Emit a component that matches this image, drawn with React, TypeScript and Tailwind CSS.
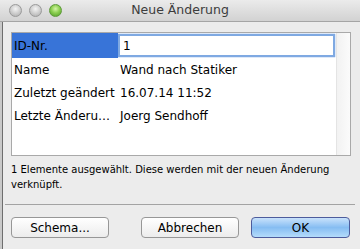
import { useState } from 'react'

const font = { fontFamily: '"DejaVu Sans", "Liberation Sans", sans-serif' }

function TrafficLight({ green }: { green?: boolean }) {
  return (
    <div
      className={
        green
          ? 'w-[13px] h-[13px] rounded-full border border-[#5e9a3a] bg-[radial-gradient(circle_at_50%_35%,#d6f5a8_0%,#8dd052_45%,#4e9a26_100%)]'
          : 'w-[13px] h-[13px] rounded-full border border-[#9a9a9a] bg-[radial-gradient(circle_at_50%_35%,#f4f4f4_0%,#cfcfcf_50%,#a9a9a9_100%)]'
      }
    />
  )
}

function Row({ label, value }: { label: string; value: string }) {
  return (
    <div className="flex h-[23px] items-center text-[12px] text-black">
      <div className="w-[106px] pl-[2px] whitespace-nowrap">{label}</div>
      <div className="pl-[2px] whitespace-nowrap">{value}</div>
    </div>
  )
}

export default function App() {
  const [id, setId] = useState('1')

  return (
    <div className="w-[360px] h-[249px] bg-[#ececec] flex flex-col overflow-hidden" style={font}>
      <div className="h-[22px] relative flex items-center border-b border-[#a5a5a5] bg-gradient-to-b from-[#ebebeb] to-[#d2d2d2]">
        <div className="flex gap-[7px] pl-[9px]">
          <TrafficLight />
          <TrafficLight />
          <TrafficLight green />
        </div>
        <div className="absolute inset-0 flex items-center justify-center text-[12.5px] text-[#3c3c3c]">
          Neue Änderung
        </div>
      </div>

      <div className="flex flex-1">
        <div className="w-[3px] bg-[#c9c9c9] border-r border-[#6e6e6e]" />
        <div className="flex-1 flex flex-col pl-[8px]">
          <div className="mt-[10px] w-[340px] h-[124px] bg-white border border-[#a9a9a9] flex">
            <div className="flex-1 flex flex-col">
              <div className="flex h-[25px] items-stretch text-[12px] text-black">
                <div className="w-[106px] bg-[#3874d8] pl-[2px] flex items-center">ID-Nr.</div>
                <div className="flex-1 flex items-center pr-[1px]">
                  <input
                    value={id}
                    onChange={(e) => setId(e.target.value)}
                    className="w-full h-[23px] px-[3px] text-[12px] bg-white outline-none border-2 border-[#7fa9e2] shadow-[0_0_1px_#3f7fd8]"
                    style={font}
                  />
                </div>
              </div>
              <Row label="Name" value="Wand nach Statiker" />
              <Row label="Zuletzt geändert" value="16.07.14 11:52" />
              <Row label="Letzte Änderu…" value="Joerg Sendhoff" />
            </div>
            <div className="w-[14px] border-l border-[#e4e4e4] bg-gradient-to-r from-[#f2f2f2] to-[#fbfbfb]" />
          </div>

          <p className="mt-[6px] w-[342px] text-[10px] leading-[15px] text-black">
            1 Elemente ausgewählt. Diese werden mit der neuen Änderung verknüpft.
          </p>

          <div className="mt-auto mb-[11px]">
            <div className="-ml-[6px] w-[350px] h-px bg-[#a3a3a3] mb-[12px]" />
            <div className="flex items-center text-[12px]">
              <button className="w-[98px] h-[21px] rounded-[4px] border border-[#979797] bg-gradient-to-b from-white to-[#ececec] text-black">
                Schema...
              </button>
              <button className="ml-[32px] w-[98px] h-[21px] rounded-[4px] border border-[#979797] bg-gradient-to-b from-white to-[#ececec] text-black">
                Abbrechen
              </button>
              <button className="ml-[12px] w-[99px] h-[21px] rounded-[4px] border border-[#4d5c9c] bg-gradient-to-b from-[#c9e2fb] via-[#86bdf2] to-[#b4dcfb] text-black">
                OK
              </button>
            </div>
          </div>
        </div>
      </div>
    </div>
  )
}
